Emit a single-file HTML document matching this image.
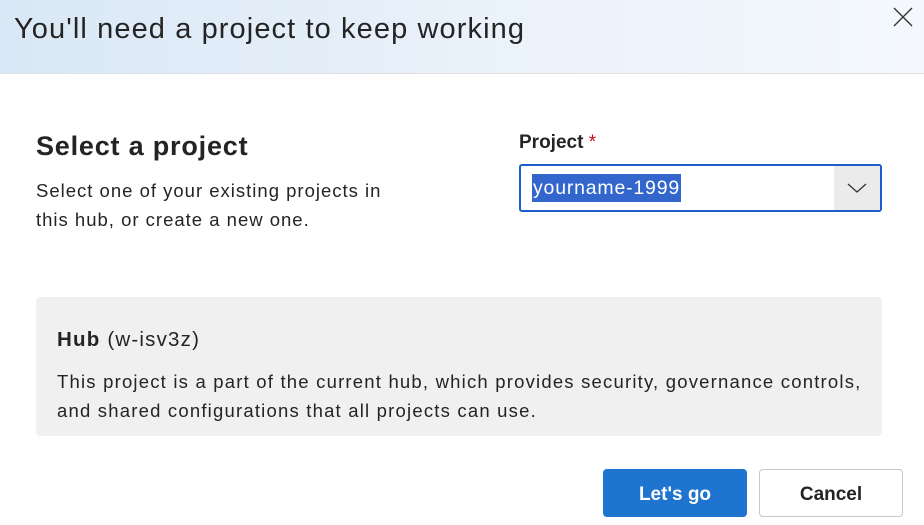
<!DOCTYPE html>
<html><head><style>
*{margin:0;padding:0;box-sizing:border-box}
body{width:924px;height:525px;background:#fff;font-family:"Segoe UI","Liberation Sans",sans-serif;color:#242424;position:relative;overflow:hidden}
.hdr{position:absolute;left:0;top:0;width:924px;height:74px;background:linear-gradient(90deg,#d9e8f6 0%,#e9f1fa 50%,#f4f8fc 100%);border-bottom:1px solid #e0e0e0}
.hdr h1{position:absolute;left:14px;top:13px;font-size:29px;font-weight:400;color:#242424;letter-spacing:1.1px;white-space:nowrap}
.x{position:absolute;left:892px;top:6px}
.t1{position:absolute;left:36px;top:131px;font-size:27px;font-weight:600;letter-spacing:0.8px}
.d1{position:absolute;left:36px;top:176px;font-size:18.5px;line-height:29px;color:#242424;letter-spacing:1px}
.lbl{position:absolute;left:519px;top:132px;font-size:19px;font-weight:600}
.lbl span{color:#c50f1f;font-weight:400}
.inp{position:absolute;left:519px;top:164px;width:363px;height:48px;border:2px solid #1a5fcc;border-radius:3px;background:#fff}
.sel{position:absolute;left:11px;top:8px;height:28px;background:#3366cc;color:#fff;font-size:19.5px;line-height:28px;padding:0 1px;letter-spacing:0.8px}
.btn{position:absolute;right:0;top:0;width:46px;height:44px;background:#ebebeb}
.hub{position:absolute;left:36px;top:297px;width:846px;height:139px;background:#f0f0f0;border-radius:4px}
.hub .h{position:absolute;left:21px;top:31px;font-size:20.5px;letter-spacing:1.2px}
.hub .h b{font-weight:600}
.hub .p{position:absolute;left:21px;top:70px;font-size:18.5px;line-height:29px;letter-spacing:1.2px;white-space:nowrap}
.go{position:absolute;left:603px;top:469px;width:144px;height:48px;background:#1f74d0;border-radius:4px;color:#fff;font-size:19px;font-weight:600;text-align:center;line-height:52px}
.cn{position:absolute;left:759px;top:469px;width:144px;height:48px;background:#fff;border:1px solid #c8c8c8;border-radius:4px;color:#242424;font-size:19px;font-weight:600;text-align:center;line-height:50px}
</style></head><body>
<div class="hdr"><h1>You'll need a project to keep working</h1>
<svg class="x" width="22" height="22" viewBox="0 0 22 22"><path d="M2 2L20 20M20 2L2 20" stroke="#333" stroke-width="1.4" fill="none"/></svg></div>
<div class="t1">Select a project</div>
<div class="d1">Select one of your existing projects in<br>this hub, or create a new one.</div>
<div class="lbl">Project <span>*</span></div>
<div class="inp"><div class="sel">yourname-1999</div><div class="btn"><svg width="46" height="44" viewBox="0 0 46 44"><path d="M14 18L23 26L32 18" stroke="#333" stroke-width="1.3" fill="none"/></svg></div></div>
<div class="hub"><div class="h"><b>Hub</b> (w-isv3z)</div><div class="p">This project is a part of the current hub, which provides security, governance controls,<br>and shared configurations that all projects can use.</div></div>
<div class="go">Let's go</div>
<div class="cn">Cancel</div>
</body></html>
